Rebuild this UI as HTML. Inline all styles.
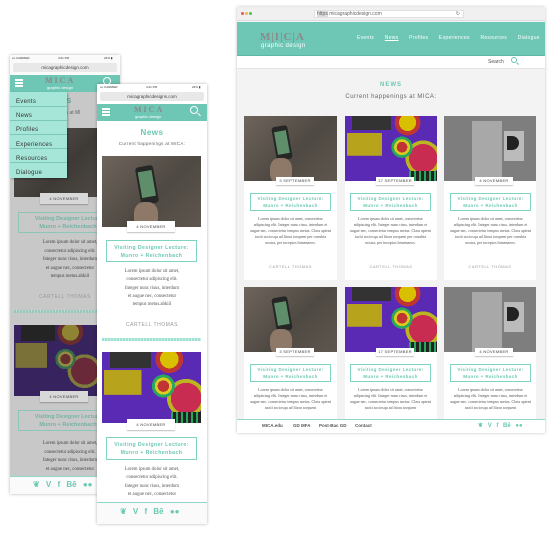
<!DOCTYPE html><html><head><meta charset="utf-8"><style>
*{margin:0;padding:0;box-sizing:border-box}
body{width:550px;height:550px;background:#fff;position:relative;overflow:hidden;font-family:"Liberation Sans",sans-serif}
.a{position:absolute}
.photo{position:absolute;overflow:hidden;background:linear-gradient(135deg,#6e655c,#4f4943 55%,#5d574f)}
.photo .ph{position:absolute;background:#262626;border-radius:3px;transform:rotate(-10deg)}
.photo .ph i{position:absolute;left:12%;right:12%;top:14%;bottom:18%;background:#5f8f6a}
.photo .hand{position:absolute;background:#8e7868;border-radius:40%}
.purp{position:absolute;overflow:hidden;background:
radial-gradient(circle at 62% 48%,#c03434 0 8%,#d8cc20 8% 12%,#28a85c 12% 16%,transparent 16%),
radial-gradient(circle at 85% 65%,#c82c50 0 16%,#bcb420 16% 20%,transparent 20%),
radial-gradient(circle at 68% 10%,#d8c000 0 10%,#c03434 10% 15%,transparent 15%),
linear-gradient(90deg,transparent 2%,#b8a41c 2% 40%,transparent 40%) 0 40%/100% 35% no-repeat,
#5a2ab4}
.purp .box{position:absolute;left:8%;top:0;width:42%;height:22%;background:#333;color:#ddd;font-size:3px}
.purp .g{position:absolute;left:70%;bottom:0;width:30%;height:16%;background:repeating-linear-gradient(90deg,#28a85c 0 2px,#222 2px 5px)}
.gray{position:absolute;overflow:hidden;background:#7e7e7e}
.gray .p{position:absolute;background:#a8a8a8}
.date{position:absolute;background:#fff;font-size:4px;letter-spacing:.3px;color:#444;text-align:center;white-space:nowrap;box-shadow:0 1px 1px rgba(0,0,0,.25)}
.tbox{position:absolute;border:1.5px solid #7ed3c1;color:#6cc8b3;text-align:center;font-weight:bold;letter-spacing:.4px;background:#fff;white-space:nowrap}
.txt{position:absolute;font-family:"Liberation Serif",serif;color:#555;text-align:center}
.auth{position:absolute;color:#999;text-align:center;letter-spacing:.5px}
.teal{background:#6ec6b4}
.soc{position:absolute;color:#6cc8b3;font-weight:bold;white-space:nowrap}
.wave{position:absolute;height:3px;background:repeating-linear-gradient(90deg,#9fe0d2 0 2px,#c6efe6 2px 3px)}
.st{position:absolute;font-size:3px;color:#333;white-space:nowrap}
</style></head><body>

<!-- ============ DESKTOP ============ -->
<div class="a" style="left:237px;top:7px;width:308px;height:426px;background:#f3f3f3;box-shadow:0 0 3px rgba(0,0,0,.25)"></div>
<div class="a" style="left:237px;top:7px;width:308px;height:14px;background:#f0f0f0;border-bottom:1px solid #ddd"></div>
<div class="a" style="left:241px;top:12px;width:3px;height:3px;border-radius:2px;background:#e55"></div>
<div class="a" style="left:245px;top:12px;width:3px;height:3px;border-radius:2px;background:#eb4"></div>
<div class="a" style="left:249px;top:12px;width:3px;height:3px;border-radius:2px;background:#5b5"></div>
<div class="a" style="left:314px;top:10px;width:150px;height:8px;background:#fff;border:1px solid #e0e0e0;font-size:5px;color:#666;padding-left:2px;line-height:6px"><span style="background:#ddd">https</span> micagraphicdesign.com<span style="float:right;margin-right:3px">↻</span></div>
<div class="a teal" style="left:237px;top:22px;width:308px;height:34px;border-bottom:1px solid #5ab8a5"></div>
<div class="a" style="left:260px;top:31px;font-family:'Liberation Serif',serif;font-weight:bold;font-size:11px;color:#8a8a8a;letter-spacing:1px">M|I|C|A</div>
<div class="a" style="left:261px;top:43px;font-size:6px;color:#fff;letter-spacing:.4px">graphic design</div>
<div class="a" style="left:357px;top:35px;font-size:5px;color:#fff;word-spacing:9px;letter-spacing:.3px;white-space:nowrap">Events <u>News</u> Profiles Experiences Resources Dialogue</div>
<div class="a" style="left:237px;top:56px;width:308px;height:13px;background:#fff;border-bottom:1px solid #e4e4e4"></div>
<div class="a" style="left:488px;top:59px;font-size:5px;color:#555">Search</div>
<div class="a" style="left:511px;top:57px;width:6px;height:6px;border:1.3px solid #6cc8b3;border-radius:50%"></div>
<div class="a" style="left:516px;top:63px;width:3px;height:1.3px;background:#6cc8b3;transform:rotate(45deg)"></div>
<div class="a" style="left:237px;top:82px;width:308px;text-align:center;font-size:6px;font-weight:bold;color:#6cc8b3;letter-spacing:1px">NEWS</div>
<div class="a" style="left:237px;top:94px;width:308px;text-align:center;font-size:6px;color:#666;letter-spacing:.5px">Current happenings at MICA:</div>

<!-- cards row 1 -->
<div class="a" style="left:244px;top:116px;width:93px;height:164px;background:#fff"></div>
<div class="a" style="left:345px;top:116px;width:92px;height:164px;background:#fff"></div>
<div class="a" style="left:444px;top:116px;width:92px;height:164px;background:#fff"></div>
<div class="photo" style="left:244px;top:116px;width:93px;height:65px"><div class="ph" style="left:30px;top:10px;width:16px;height:34px"><i></i></div><div class="hand" style="left:26px;top:42px;width:22px;height:26px"></div></div>
<div class="purp" style="left:345px;top:116px;width:92px;height:65px"><div class="box"></div><div class="g"></div></div>
<div class="gray" style="left:444px;top:116px;width:92px;height:65px"><div class="p" style="left:28px;top:5px;width:30px;height:60px"></div><div class="p" style="left:60px;top:15px;width:20px;height:30px;background:#bbb"></div><div class="a" style="left:63px;top:20px;width:12px;height:14px;background:#222;border-radius:0 7px 7px 0"></div></div>
<div class="date" style="left:276px;top:177px;width:38px;height:8px;line-height:8px">3 SEPTEMBER</div>
<div class="date" style="left:376px;top:177px;width:38px;height:8px;line-height:8px">17 SEPTEMBER</div>
<div class="date" style="left:475px;top:177px;width:38px;height:8px;line-height:8px">4 NOVEMBER</div>
<div class="tbox" style="left:250px;top:193px;width:81px;height:18px;font-size:4.5px;line-height:6.5px;padding-top:2px">Visiting Designer Lecture:<br>Munro + Reichenbach</div>
<div class="tbox" style="left:350px;top:193px;width:81px;height:18px;font-size:4.5px;line-height:6.5px;padding-top:2px">Visiting Designer Lecture:<br>Munro + Reichenbach</div>
<div class="tbox" style="left:450px;top:193px;width:81px;height:18px;font-size:4.5px;line-height:6.5px;padding-top:2px">Visiting Designer Lecture:<br>Munro + Reichenbach</div>
<div class="txt" style="left:250px;top:216px;width:81px;font-size:4px;line-height:6px">Lorem ipsum dolor sit amet, consectetur adipiscing elit. Integer nunc risus, interdum et augue nec, consectetur tempus metus. Class aptent taciti sociosqu ad litora torquent per conubia nostra, per inceptos himenaeos.</div>
<div class="txt" style="left:350px;top:216px;width:81px;font-size:4px;line-height:6px">Lorem ipsum dolor sit amet, consectetur adipiscing elit. Integer nunc risus, interdum et augue nec, consectetur tempus metus. Class aptent taciti sociosqu ad litora torquent per conubia nostra, per inceptos himenaeos.</div>
<div class="txt" style="left:450px;top:216px;width:81px;font-size:4px;line-height:6px">Lorem ipsum dolor sit amet, consectetur adipiscing elit. Integer nunc risus, interdum et augue nec, consectetur tempus metus. Class aptent taciti sociosqu ad litora torquent per conubia nostra, per inceptos himenaeos.</div>
<div class="auth" style="left:244px;top:264px;width:93px;font-size:4px">CARTELL THOMAS</div>
<div class="auth" style="left:345px;top:264px;width:92px;font-size:4px">CARTELL THOMAS</div>
<div class="auth" style="left:444px;top:264px;width:92px;font-size:4px">CARTELL THOMAS</div>

<!-- cards row 2 -->
<div class="a" style="left:244px;top:287px;width:93px;height:132px;background:#fff"></div>
<div class="a" style="left:345px;top:287px;width:92px;height:132px;background:#fff"></div>
<div class="a" style="left:444px;top:287px;width:92px;height:132px;background:#fff"></div>
<div class="photo" style="left:244px;top:287px;width:93px;height:65px"><div class="ph" style="left:30px;top:10px;width:16px;height:34px"><i></i></div><div class="hand" style="left:26px;top:42px;width:22px;height:26px"></div></div>
<div class="purp" style="left:345px;top:287px;width:92px;height:65px"><div class="box"></div><div class="g"></div></div>
<div class="gray" style="left:444px;top:287px;width:92px;height:65px"><div class="p" style="left:28px;top:5px;width:30px;height:60px"></div><div class="p" style="left:60px;top:15px;width:20px;height:30px;background:#bbb"></div><div class="a" style="left:63px;top:20px;width:12px;height:14px;background:#222;border-radius:0 7px 7px 0"></div></div>
<div class="date" style="left:276px;top:348px;width:38px;height:8px;line-height:8px">3 SEPTEMBER</div>
<div class="date" style="left:376px;top:348px;width:38px;height:8px;line-height:8px">17 SEPTEMBER</div>
<div class="date" style="left:475px;top:348px;width:38px;height:8px;line-height:8px">4 NOVEMBER</div>
<div class="tbox" style="left:250px;top:364px;width:81px;height:18px;font-size:4.5px;line-height:6.5px;padding-top:2px">Visiting Designer Lecture:<br>Munro + Reichenbach</div>
<div class="tbox" style="left:350px;top:364px;width:81px;height:18px;font-size:4.5px;line-height:6.5px;padding-top:2px">Visiting Designer Lecture:<br>Munro + Reichenbach</div>
<div class="tbox" style="left:450px;top:364px;width:81px;height:18px;font-size:4.5px;line-height:6.5px;padding-top:2px">Visiting Designer Lecture:<br>Munro + Reichenbach</div>
<div class="txt" style="left:250px;top:387px;width:81px;height:31px;overflow:hidden;font-size:4px;line-height:6px">Lorem ipsum dolor sit amet, consectetur adipiscing elit. Integer nunc risus, interdum et augue nec, consectetur tempus metus. Class aptent taciti sociosqu ad litora torquent</div>
<div class="txt" style="left:350px;top:387px;width:81px;height:31px;overflow:hidden;font-size:4px;line-height:6px">Lorem ipsum dolor sit amet, consectetur adipiscing elit. Integer nunc risus, interdum et augue nec, consectetur tempus metus. Class aptent taciti sociosqu ad litora torquent</div>
<div class="txt" style="left:450px;top:387px;width:81px;height:31px;overflow:hidden;font-size:4px;line-height:6px">Lorem ipsum dolor sit amet, consectetur adipiscing elit. Integer nunc risus, interdum et augue nec, consectetur tempus metus. Class aptent taciti sociosqu ad litora torquent</div>
<div class="a" style="left:237px;top:419px;width:308px;height:14px;background:#fff;border-top:1.5px solid #8fd8c8"></div>
<div class="a" style="left:262px;top:423px;font-size:4.5px;color:#555;font-weight:bold;white-space:nowrap">MICA.edu</div>
<div class="a" style="left:293px;top:423px;font-size:4.5px;color:#555;font-weight:bold;white-space:nowrap">GD MFA</div>
<div class="a" style="left:319px;top:423px;font-size:4.5px;color:#555;font-weight:bold;white-space:nowrap">Post-Bac GD</div>
<div class="a" style="left:355px;top:423px;font-size:4.5px;color:#555;font-weight:bold;white-space:nowrap">Contact</div>
<div class="soc" style="left:478px;top:422px;font-size:6px;word-spacing:3px">❦ V f Bē ●●</div>

<!-- ============ PHONE 1 (back) ============ -->
<div class="a" style="left:10px;top:55px;width:110px;height:439px;background:#fafafa;box-shadow:0 0 3px rgba(0,0,0,.3)"></div>
<div class="st" style="left:12px;top:56px">▪▪▪ CARRIER</div><div class="st" style="left:58px;top:56px">4:21 PM</div><div class="st" style="left:104px;top:56px">22% ▮</div>
<div class="a" style="left:13px;top:63px;width:104px;height:9px;background:#e8e8e8;border-radius:2px;font-size:4.5px;color:#444;text-align:center;line-height:9px">micagraphicdesign.com</div>
<div class="a teal" style="left:10px;top:75px;width:110px;height:17px"></div>
<div class="a" style="left:15px;top:79px;width:8px;height:1.5px;background:#fff;box-shadow:0 3px 0 #fff,0 6px 0 #fff"></div>
<div class="a" style="left:45px;top:76px;font-family:'Liberation Serif',serif;font-weight:bold;font-size:8px;color:#888;letter-spacing:2px">MICA</div>
<div class="a" style="left:47px;top:85px;font-size:4px;color:#fff">graphic design</div>
<div class="a" style="left:103px;top:77px;width:8px;height:8px;border:1.3px solid #fff;border-radius:50%"></div>
<div class="a" style="left:10px;top:92px;width:110px;height:384px;background:#c8c8c8"></div>
<div class="a" style="left:60px;top:98px;font-size:7px;font-weight:bold;color:#63a898">WS</div>
<div class="a" style="left:60px;top:110px;font-size:5px;color:#666">ngs at MI</div>
<div class="a" style="left:14px;top:128px;width:83px;height:69px;background:linear-gradient(135deg,#5e5852,#3e3a36 60%,#4e4944)"></div>
<div class="date" style="left:40px;top:193px;width:48px;height:11px;line-height:11px;background:#d8d8d8;font-size:4px">4 NOVEMBER</div>
<div class="a" style="left:18px;top:212px;width:100px;height:21px;border:1.5px solid #8bc6b8;color:#74b3a3;font-weight:bold;font-size:5.5px;line-height:8px;text-align:center;padding-top:2px;white-space:nowrap;overflow:hidden">Visiting Designer Lecture<br>Munro + Reichenbach</div>
<div class="txt" style="left:18px;top:239px;width:104px;font-size:4.8px;line-height:8.5px;color:#444">Lorem ipsum dolor sit amet,<br>consectetur adipiscing elit.<br>Integer nunc risus, interdum<br>et augue nec, consectetur<br>tempus metus.abkiil</div>
<div class="auth" style="left:10px;top:294px;width:110px;font-size:5px;color:#999">CARTELL THOMAS</div>
<div class="wave" style="left:14px;top:310px;width:90px;background:repeating-linear-gradient(90deg,#98c8bc 0 2px,#b8d8d0 2px 3px)"></div>
<div class="purp" style="left:14px;top:325px;width:83px;height:71px;filter:brightness(.7) saturate(.6)"><div class="box"></div></div>
<div class="date" style="left:40px;top:391px;width:48px;height:11px;line-height:11px;background:#d8d8d8;font-size:4px">4 NOVEMBER</div>
<div class="a" style="left:18px;top:410px;width:100px;height:21px;border:1.5px solid #8bc6b8;color:#74b3a3;font-weight:bold;font-size:5.5px;line-height:8px;text-align:center;padding-top:2px;white-space:nowrap;overflow:hidden">Visiting Designer Lecture<br>Munro + Reichenbach</div>
<div class="txt" style="left:18px;top:440px;width:104px;font-size:4.8px;line-height:8.5px;color:#444">Lorem ipsum dolor sit amet,<br>consectetur adipiscing elit.<br>Integer nunc risus, interdum<br>et augue nec, consectetur</div>
<div class="a" style="left:10px;top:476px;width:110px;height:18px;background:#fafafa;border-top:1.5px solid #8fd8c8"></div>
<div class="soc" style="left:33px;top:480px;font-size:8px;word-spacing:4px">❦ V f Bē ●●</div>
<!-- menu -->
<div class="a" style="left:10px;top:92px;width:57px;height:86px;background:#a6e6d8;box-shadow:1px 1px 2px rgba(0,0,0,.3)"></div>
<div class="a" style="left:16px;top:95px;font-size:6px;color:#333;line-height:14.2px;letter-spacing:.3px">Events<br>News<br>Profiles<br>Experiences<br>Resources<br>Dialogue</div>
<div class="a" style="left:10px;top:106px;width:57px;height:1px;background:#7cc8b8;box-shadow:0 14px 0 #7cc8b8,0 28px 0 #7cc8b8,0 42px 0 #7cc8b8,0 56px 0 #7cc8b8"></div>

<!-- ============ PHONE 2 (front) ============ -->
<div class="a" style="left:97px;top:84px;width:110px;height:440px;background:#fff;box-shadow:0 0 3px rgba(0,0,0,.3)"></div>
<div class="st" style="left:100px;top:85px">▪▪▪ CARRIER</div><div class="st" style="left:146px;top:85px">4:21 PM</div><div class="st" style="left:192px;top:85px">22% ▮</div>
<div class="a" style="left:100px;top:92px;width:104px;height:9px;background:#e8e8e8;border-radius:2px;font-size:4.5px;color:#444;text-align:center;line-height:9px">micagraphicdesigns.com</div>
<div class="a teal" style="left:97px;top:104px;width:110px;height:17px"></div>
<div class="a" style="left:102px;top:108px;width:8px;height:1.5px;background:#fff;box-shadow:0 3px 0 #fff,0 6px 0 #fff"></div>
<div class="a" style="left:134px;top:105px;font-family:'Liberation Serif',serif;font-weight:bold;font-size:8px;color:#888;letter-spacing:2px">MICA</div>
<div class="a" style="left:135px;top:114px;font-size:4px;color:#fff">graphic design</div>
<div class="a" style="left:190px;top:106px;width:8px;height:8px;border:1.3px solid #fff;border-radius:50%"></div>
<div class="a" style="left:197px;top:114px;width:4px;height:1.3px;background:#fff;transform:rotate(45deg)"></div>
<div class="a" style="left:97px;top:128px;width:110px;text-align:center;font-size:8px;font-weight:bold;color:#6cc8b3;letter-spacing:.5px">News</div>
<div class="a" style="left:97px;top:141px;width:110px;text-align:center;font-size:4.5px;color:#666;letter-spacing:.3px">Current happenings at MICA:</div>
<div class="photo" style="left:102px;top:156px;width:99px;height:71px"><div class="ph" style="left:36px;top:10px;width:18px;height:38px"><i></i></div><div class="hand" style="left:32px;top:46px;width:24px;height:28px"></div></div>
<div class="date" style="left:127px;top:221px;width:48px;height:11px;line-height:11px;font-size:4px">4 NOVEMBER</div>
<div class="tbox" style="left:106px;top:240px;width:91px;height:22px;font-size:5.2px;line-height:8px;padding-top:2.5px">Visiting Designer Lecture:<br>Munro + Reichenbach</div>
<div class="txt" style="left:97px;top:268px;width:110px;font-size:4.8px;line-height:8.3px">Lorem ipsum dolor sit amet,<br>consectetur adipiscing elit.<br>Integer nunc risus, interdum<br>et augue nec, consectetur<br>tempus metus.abkiil</div>
<div class="auth" style="left:97px;top:322px;width:110px;font-size:5px">CARTELL THOMAS</div>
<div class="wave" style="left:102px;top:338px;width:99px"></div>
<div class="purp" style="left:102px;top:352px;width:99px;height:71px"><div class="box"></div><div class="g"></div></div>
<div class="date" style="left:127px;top:419px;width:48px;height:11px;line-height:11px;font-size:4px">4 NOVEMBER</div>
<div class="tbox" style="left:106px;top:437px;width:91px;height:23px;font-size:5.2px;line-height:8px;padding-top:2.5px">Visiting Designer Lecture:<br>Munro + Reichenbach</div>
<div class="txt" style="left:97px;top:466px;width:110px;height:36px;overflow:hidden;font-size:4.8px;line-height:8.3px">Lorem ipsum dolor sit amet,<br>consectetur adipiscing elit.<br>Integer nunc risus, interdum<br>et augue nec, consectetur</div>
<div class="a" style="left:97px;top:502px;width:110px;height:22px;background:#fafafa;border-top:1.5px solid #8fd8c8"></div>
<div class="soc" style="left:120px;top:507px;font-size:8px;word-spacing:4px">❦ V f Bē ●●</div>
</body></html>
